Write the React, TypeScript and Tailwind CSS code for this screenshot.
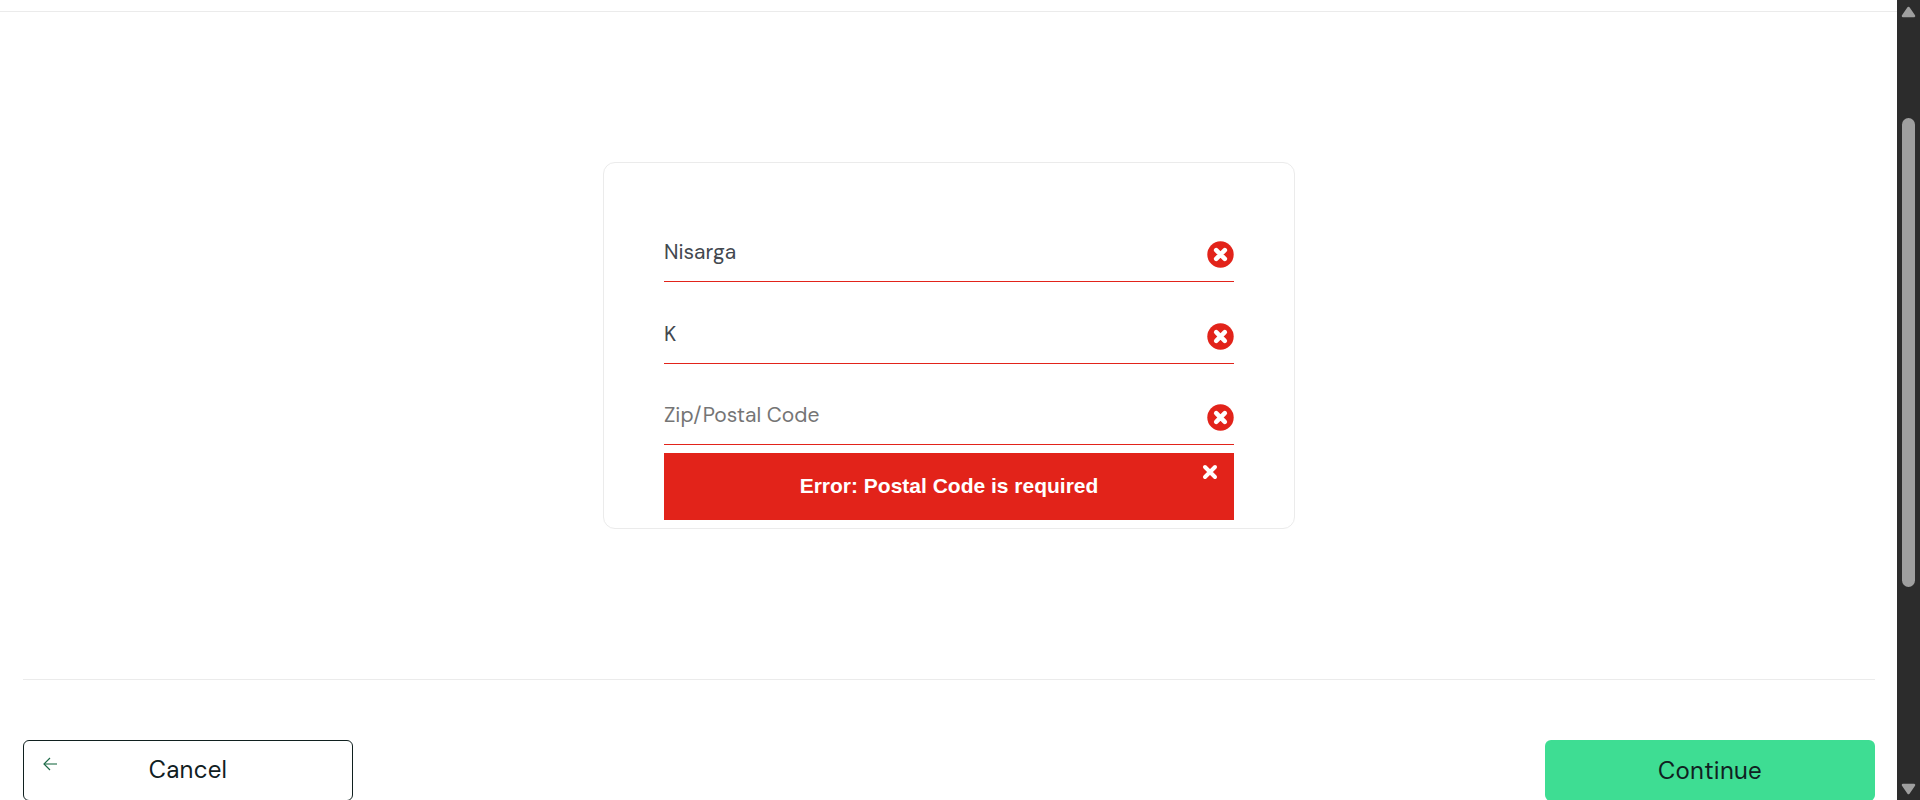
import React from "react";

const CROSS = "M-4.3-4.3L4.3 4.3M4.3-4.3L-4.3 4.3";

function ErrorBadge() {
  return (
    <svg className="h-[27px] w-[27px] shrink-0" viewBox="-13.5 -13.5 27 27">
      <circle r="13.2" fill="#e2231a" />
      <path d={CROSS} stroke="#fff" strokeWidth="4.6" strokeLinecap="round" />
    </svg>
  );
}

function Field({ text, className }: { text: string; className: string }) {
  return (
    <div className="flex h-[53px] items-start justify-between border-b border-[#e2231a] pt-[12px]">
      <div className={className}>{text}</div>
      <ErrorBadge />
    </div>
  );
}

export default function App() {
  return (
    <div className="flex h-[800px] w-full overflow-hidden bg-white font-['DM_Sans',Inter,sans-serif]">
      <main className="flex h-full flex-1 flex-col overflow-hidden">
        <div className="h-3 shrink-0 border-b border-[#ebebeb]" />

        <section className="mt-[150px] ml-[603px] flex h-[367px] w-[692px] shrink-0 flex-col rounded-xl border border-[#ebebeb] px-[60px] pt-[66px]">
          <Field text="Nisarga" className="-mt-px text-[21px] leading-6 text-[#43484f]" />
          <div className="h-[29px] shrink-0" />
          <Field text="K" className="-mt-px text-[21px] leading-6 text-[#43484f]" />
          <div className="h-[28px] shrink-0" />
          <Field text="Zip/Postal Code" className="-mt-px text-[21px] leading-6 text-[#757575]" />
          <div className="mt-2 flex h-[67px] shrink-0 bg-[#e2231a]">
            <div className="w-[51px]" />
            <div className="flex-1 pt-[21px] text-center font-['Liberation_Sans',Arial,sans-serif] text-[21px] leading-6 font-bold whitespace-nowrap text-white">
              Error: Postal Code is required
            </div>
            <div className="w-[51px] pt-[11px] pl-[19px]">
              <svg className="h-4 w-4" viewBox="-8 -8 16 16">
                <path d="M-5-5L5 5M5-5L-5 5" stroke="#fff" strokeWidth="4" strokeLinecap="round" />
              </svg>
            </div>
          </div>
        </section>

        <footer className="mr-[22px] ml-[23px] mt-[150px] flex shrink-0 justify-between border-t border-[#ebebeb] pt-[60px]">
          <button className="flex h-[61px] w-[330px] items-start rounded-[6px] border border-[#10201f]">
            <svg className="mt-[15px] ml-[19px] h-4 w-4" viewBox="0 0 16 16" fill="none" strokeWidth="1.2">
              <path d="M1.5 8H14" stroke="#5b9478" strokeWidth="1.5" />
              <path d="M7 2L1 8L7 14" stroke="#1f6b49" />
            </svg>
            <span className="flex-1 pt-[15px] pr-[35px] text-center text-[24px] leading-[28px] tracking-[0.3px] text-[#10201f]">
              Cancel
            </span>
          </button>
          <button className="flex h-[61px] w-[330px] items-start justify-center rounded-[6px] bg-[#3edd93] pt-[17px] text-[24px] leading-[28px] tracking-[0.3px] text-[#10201f]">
            Continue
          </button>
        </footer>
      </main>

      <aside className="flex h-full w-[23px] shrink-0 flex-col items-center justify-between bg-[#2c2c2c] pt-[6px] pb-[5px]">
        <svg className="h-3 w-[15px] shrink-0" viewBox="0 0 15 12">
          <path d="M7.5 2L13 10H2Z" fill="#9f9f9f" stroke="#9f9f9f" strokeWidth="2.5" strokeLinejoin="round" />
        </svg>
        <div className="mb-[96px] h-[469px] w-[13px] rounded-full bg-[#9f9f9f]" />
        <svg className="h-3 w-[15px] shrink-0" viewBox="0 0 15 12">
          <path d="M7.5 10L13 2H2Z" fill="#9f9f9f" stroke="#9f9f9f" strokeWidth="2.5" strokeLinejoin="round" />
        </svg>
      </aside>
    </div>
  );
}
